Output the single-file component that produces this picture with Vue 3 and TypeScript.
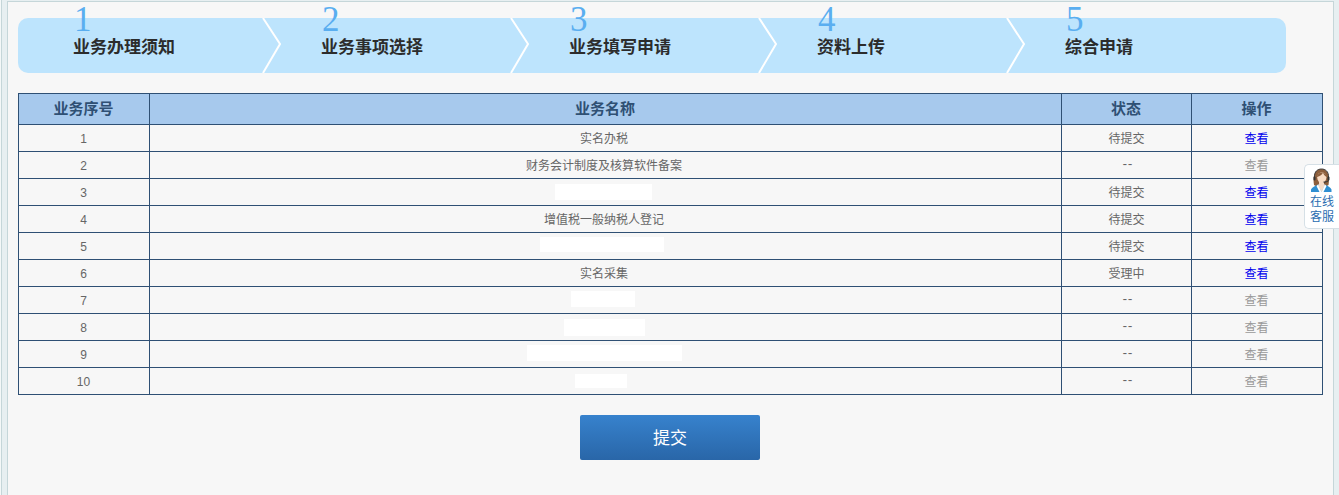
<script setup lang="ts">
interface Row {
  id: number;
  name?: string;
  // redacted name: left edge inside the cell, top offset, width, height
  blank?: [number, number, number, number];
  status: string;
  active: boolean;
}

const steps = ["业务办理须知", "业务事项选择", "业务填写申请", "资料上传", "综合申请"];

const rows: Row[] = [
  { id: 1, name: "实名办税", status: "待提交", active: true },
  { id: 2, name: "财务会计制度及核算软件备案", status: "--", active: false },
  { id: 3, blank: [405, 5, 97, 16], status: "待提交", active: true },
  { id: 4, name: "增值税一般纳税人登记", status: "待提交", active: true },
  { id: 5, blank: [390, 4, 124, 15], status: "待提交", active: true },
  { id: 6, name: "实名采集", status: "受理中", active: true },
  { id: 7, blank: [421, 4, 64, 16], status: "--", active: false },
  { id: 8, blank: [414, 5, 81, 17], status: "--", active: false },
  { id: 9, blank: [377, 4, 155, 16], status: "--", active: false },
  { id: 10, blank: [425, 6, 52, 14], status: "--", active: false },
];

function blankStyle(b: [number, number, number, number]) {
  return {
    marginLeft: b[0] + "px",
    marginTop: b[1] + "px",
    width: b[2] + "px",
    height: b[3] + "px",
  };
}
</script>

<template>
  <div class="page">
    <div class="rail"></div>
    <div class="panel">
      <div class="steps">
        <div v-for="(step, i) in steps" :key="step" class="step">
          <span class="step-num">{{ i + 1 }}</span>
          <span class="step-name">{{ step }}</span>
          <svg v-if="i < 4" class="chevron" width="20" height="55" viewBox="0 0 20 55">
            <path d="M1 0 L18 26 L1 55" fill="none" stroke="#fff" stroke-width="2" />
          </svg>
        </div>
      </div>

      <table class="grid">
        <colgroup>
          <col style="width: 131px" />
          <col style="width: 912px" />
          <col style="width: 130px" />
          <col style="width: 131px" />
        </colgroup>
        <thead>
          <tr>
            <th>业务序号</th>
            <th>业务名称</th>
            <th>状态</th>
            <th>操作</th>
          </tr>
        </thead>
        <tbody>
          <tr v-for="row in rows" :key="row.id">
            <td class="num">{{ row.id }}</td>
            <td class="name">
              <template v-if="row.name">{{ row.name }}</template>
              <div v-else class="blank-cell">
                <div class="blank" :style="blankStyle(row.blank!)"></div>
              </div>
            </td>
            <td class="status" :class="{ dash: row.status === '--' }">{{ row.status }}</td>
            <td>
              <a :class="row.active ? 'link' : 'link-off'">查看</a>
            </td>
          </tr>
        </tbody>
      </table>

      <div class="actions">
        <button class="submit" type="button">提交</button>
      </div>
    </div>

    <div class="service">
      <svg class="agent" width="24" height="25" viewBox="0 0 24 25">
        <!-- long hair -->
        <path d="M4 17 C2.500 8 4.500 1 11.500 1 C18 1 20 8 18.500 17 C16 19 6.500 19 4 17 Z" fill="#8d5f3c" />
        <!-- shirt -->
        <path d="M1 24 L1 21.500 C2 19 5 18 8.500 16.500 L14.500 16.500 C18 18 20.500 19 21.500 21.500 L21.500 24 Z" fill="#2f8fd2" />
        <!-- neck and open collar -->
        <path d="M9 13 L14 13 L14 16 L15 17 L11.500 24 L8 17 L9 16 Z" fill="#f6dcc8" />
        <path d="M8 16.500 L11.500 24 L9.500 24 L6.500 18 Z M15 16.500 L11.500 24 L13.500 24 L16.500 18 Z" fill="#fff" />
        <!-- face -->
        <ellipse cx="11.800" cy="9.500" rx="4.600" ry="5.200" fill="#f9dcc4" />
        <path d="M6.800 9 C7.500 5 11 4 13 4.500 C12.500 6.500 10 8.500 6.800 9 Z M13 4.500 C15 5 16.800 7 16.800 9 C15 8 13.500 6.500 13 4.500 Z" fill="#8d5f3c" />
        <!-- headset -->
        <path d="M4.500 10 C4 3 8 1 11.500 1 C15 1 19 3 18.500 10" fill="none" stroke="#3a3a3a" stroke-width="1" />
        <rect x="3.500" y="8.500" width="2" height="4" rx="1" fill="#333" />
        <rect x="17.500" y="8.500" width="2" height="4" rx="1" fill="#333" />
        <path d="M18.500 12.500 C17.500 14 16 14.200 13.500 14" fill="none" stroke="#333" stroke-width="1.200" />
      </svg>
      <span class="service-text">在线<br />客服</span>
    </div>
  </div>
</template>

<style scoped>
.page {
  width: 1339px;
  height: 495px;
  overflow: hidden;
  position: relative;
  box-sizing: border-box;
  display: flex;
  padding-top: 1px;
  background: #e7eff1;
  border-left: 1px solid #f4f8f8;
  font-family: "Liberation Sans", "Noto Sans CJK SC", sans-serif;
}

.rail {
  flex: 0 0 1px;
  margin-top: -1px;
  margin-right: 5px;
  background: #c5d6d9;
}

.panel {
  flex: 0 0 1327px;
  height: 494px;
  box-sizing: border-box;
  padding: 16px 0 0 10px;
  background: #f7f7f7;
  border: 1px solid #c5d6d9;
  border-bottom: 0;
}

.steps {
  display: flex;
  width: 1268px;
  height: 55px;
  background: #bde4fd;
  border-radius: 10px;
}

.step {
  position: relative;
  flex: 0 0 248px;
  box-sizing: border-box;
  padding-left: 55px;
}

.step:first-child {
  flex-basis: 244px;
}

.step:not(:first-child) {
  padding-left: 59px;
}

.step-num {
  display: block;
  height: 19px;
  margin: -17px 0 0 1px;
  font-family: "Liberation Serif", serif;
  font-size: 35px;
  line-height: 37px;
  color: #5aaef0;
}

.step-name {
  display: block;
  margin-top: 17px;
  font-family: "Liberation Sans", "Noto Sans CJK SC", sans-serif;
  font-size: 17px;
  line-height: 22px;
  font-weight: 700;
  color: #2c2c2c;
}

.chevron {
  position: absolute;
  top: 0;
  right: -20px;
}

.grid {
  width: 1305px;
  margin-top: 20px;
  table-layout: fixed;
  border-collapse: collapse;
  font-size: 12px;
  color: #666;
}

.grid th,
.grid td {
  border: 1px solid #2f5074;
  padding: 0 1px 0 0;
  text-align: center;
  font-family: "Noto Sans CJK SC", sans-serif;
}

.grid th {
  height: 28px;
  padding-bottom: 2px;
  line-height: 18px;
  background: #a7c9ed;
  color: #2f5074;
  font-size: 15px;
  font-weight: 700;
}

.grid td {
  height: 26px;
  line-height: 16px;
}

.grid td.num {
  height: 25px;
  padding-top: 1px;
  font-family: "Liberation Sans", sans-serif;
}

.grid td.name {
  padding-right: 3px;
}

.grid td.status {
  padding-right: 0;
}

.grid td.dash {
  font-family: "Liberation Mono", monospace;
  letter-spacing: -2px;
}

.blank-cell {
  height: 26px;
  display: flow-root;
  text-align: left;
}

.blank {
  background: #fff;
}

.link {
  color: #0000ee;
}

.link-off {
  color: #999;
}

.actions {
  display: flex;
  justify-content: center;
  margin-top: 20px;
  padding-right: 11px;
}

.submit {
  width: 180px;
  height: 45px;
  border: 0;
  border-radius: 2px;
  padding: 0 0 2px;
  background: linear-gradient(180deg, #3782cd 0%, #2966a8 100%);
  color: #fff;
  font-family: "Noto Sans CJK SC", sans-serif;
  font-size: 17px;
}

.service {
  position: absolute;
  left: 1303px;
  top: 164px;
  width: 35px;
  height: 65px;
  box-sizing: border-box;
  border: 1px solid #d6e0e6;
  border-right: 0;
  border-radius: 5px 0 0 5px;
  background: #fff;
  display: flex;
  flex-direction: column;
  align-items: center;
  padding-top: 3px;
}

.service-text {
  font-family: "Noto Sans CJK SC", sans-serif;
  font-size: 12px;
  line-height: 15px;
  color: #2a6db0;
  text-align: center;
}
</style>
